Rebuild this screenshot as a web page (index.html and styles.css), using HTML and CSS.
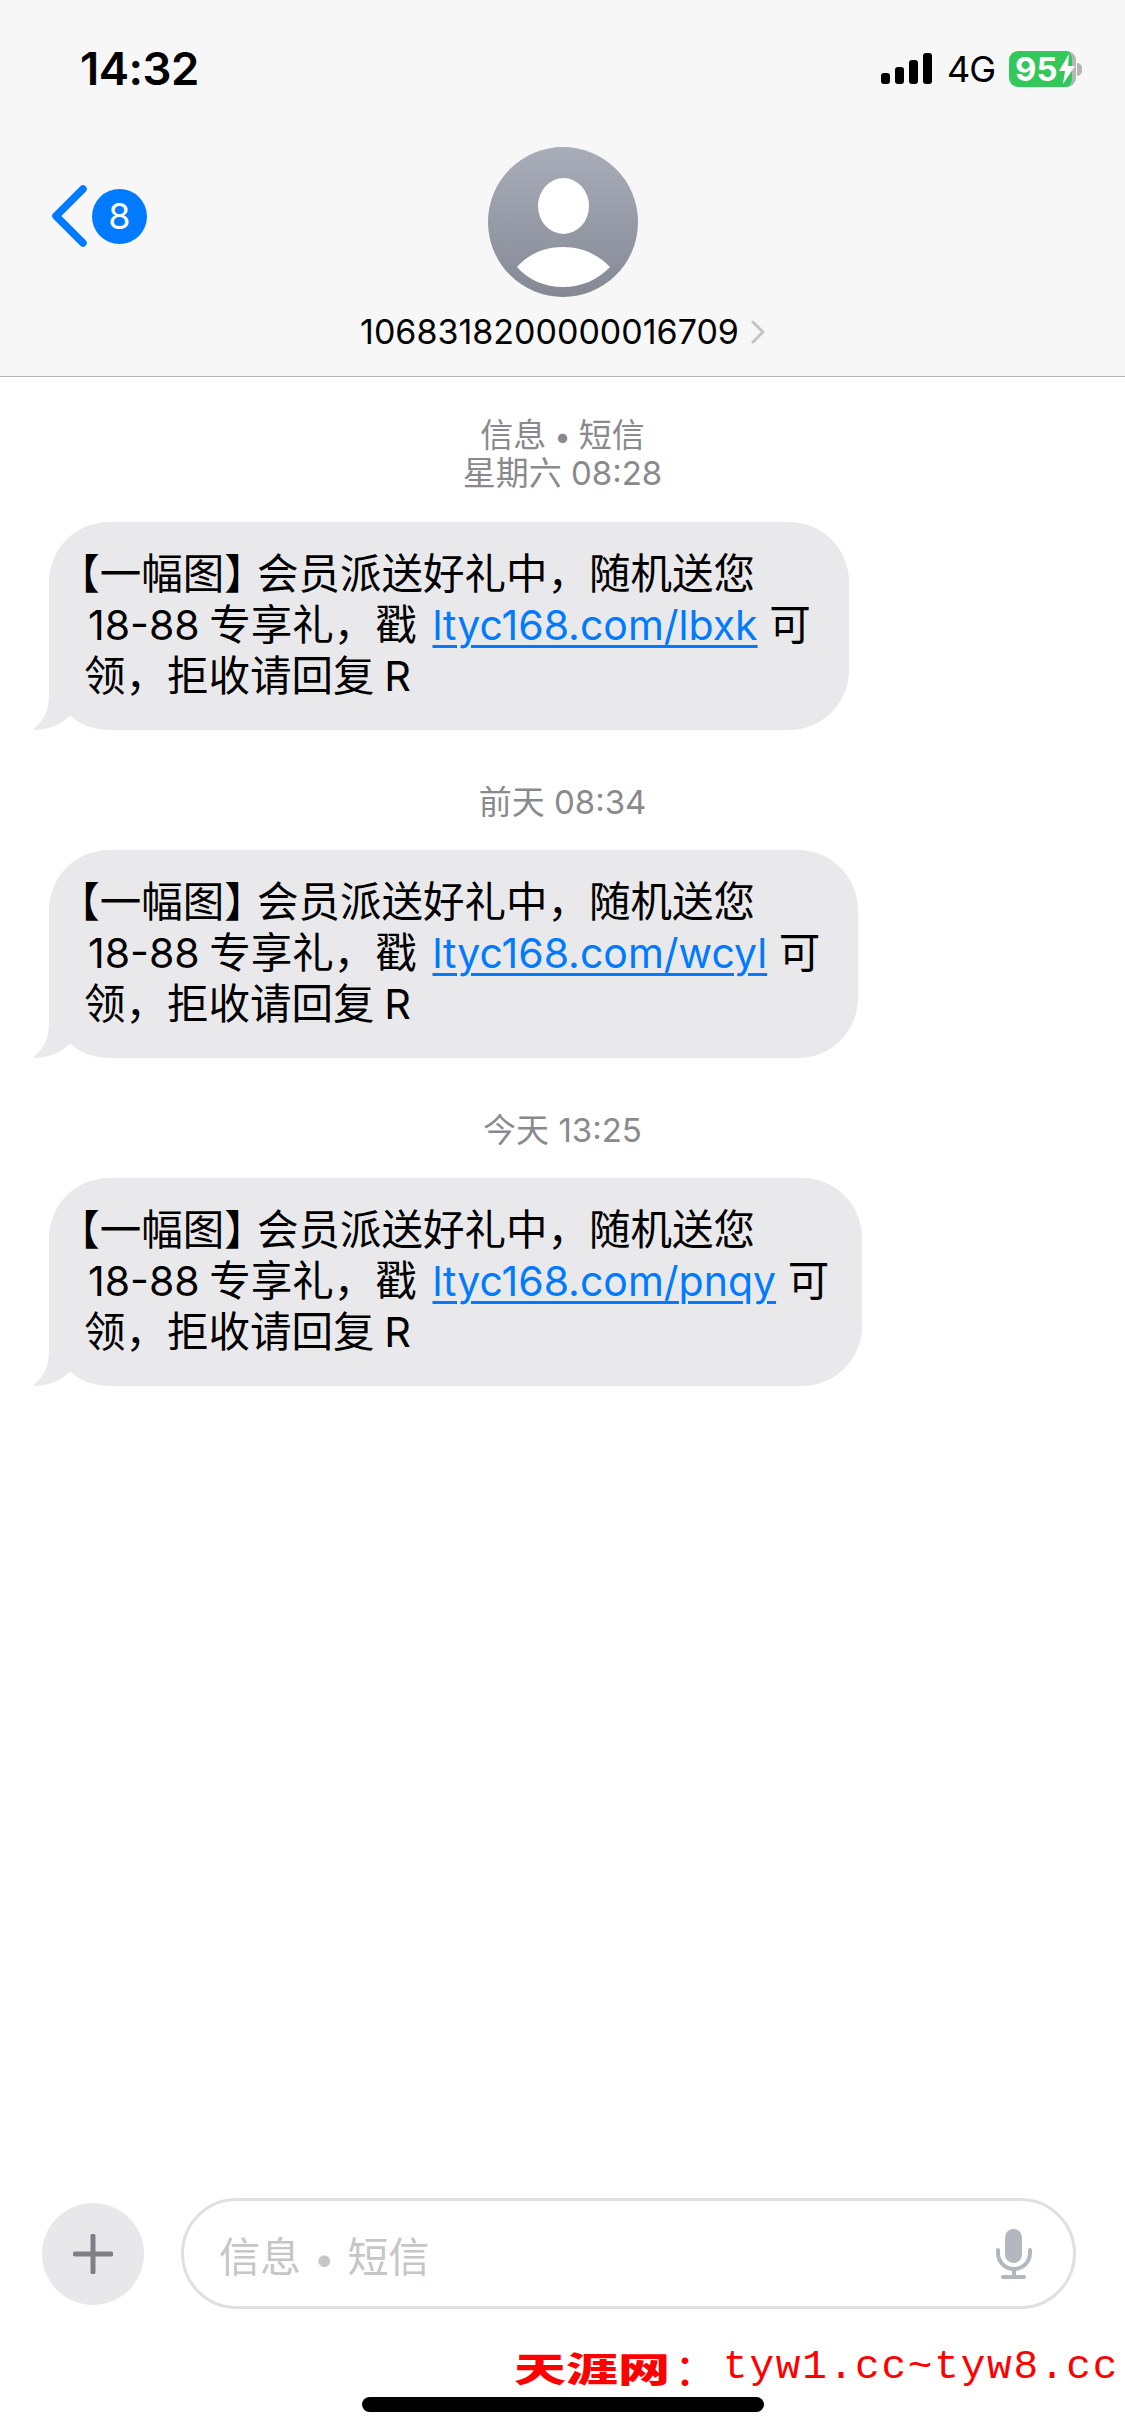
FILE: index.html
```html
<!DOCTYPE html>
<html lang="zh-CN">
<head>
<meta charset="utf-8">
<title>信息</title>
<link rel="stylesheet" href="styles.css">
</head>
<body>
<div class="screen">
  <header class="header">
    <div class="status">
      <span class="time">14:32</span>
      <div class="status-right">
        <svg class="signal" width="52" height="32" viewBox="0 0 52 32"><rect x="0" y="20" width="9" height="11" rx="3"/><rect x="14" y="14" width="9" height="17" rx="3"/><rect x="28" y="7" width="9" height="24" rx="3"/><rect x="42" y="0" width="9" height="31" rx="3"/></svg>
        <span class="net">4G</span>
        <div class="battery">
          <div class="battery-body"><span class="battery-num">95</span><svg class="bolt" width="18" height="30" viewBox="0 0 18 30"><path d="M11 0 1 17h6L5 30 17 12h-7z"/></svg></div>
          <span class="battery-cap"></span>
        </div>
      </div>
    </div>
    <div class="nav">
      <div class="back">
        <svg width="38" height="64" viewBox="0 0 38 64"><path d="M33 5 6 32l27 27" fill="none" stroke="#007aff" stroke-width="7.500" stroke-linecap="round" stroke-linejoin="round"/></svg>
        <span class="badge">8</span>
      </div>
      <svg class="avatar" width="150" height="150" viewBox="0 0 150 150">
        <defs><linearGradient id="ag" x1="0" y1="0" x2="0" y2="1"><stop offset="0" stop-color="#a9adb9"/><stop offset="1" stop-color="#858994"/></linearGradient></defs>
        <circle cx="75" cy="75" r="75" fill="url(#ag)"/>
        <ellipse cx="75.500" cy="59" rx="25.500" ry="28" fill="#fff"/>
        <path d="M29 120C40 107 57 100 75 100s35 7 47 20c-12 13-29 20-47 20s-35-7-46-20z" fill="#fff"/>
      </svg>
      <div class="contact"><span>1068318200000016709</span><svg width="14" height="24" viewBox="0 0 14 24"><path d="M2 2l10 10L2 22" fill="none" stroke="#c4c4c6" stroke-width="3" stroke-linecap="round" stroke-linejoin="round"/></svg></div>
    </div>
  </header>

  <main class="thread">
    <div class="stamp stamp-first">信息 <span class="dot">•</span> 短信<br>星期六 08:28</div>
    <div class="bubble">
      <svg class="tail" width="60" height="60" viewBox="0 0 60 60"><path d="M17 0v25C17 40 12 52 0 59.500 14 60.500 27 56 35 48l25-18V0z" fill="#e9e9eb"/></svg>
      <p class="msg"><span class="hang">【</span>一幅图<span class="close">】</span>会员派送好礼中，随机送您<br><span class="num">18-88</span> 专享礼，戳 <a class="link">ltyc168.com/lbxk</a> 可<br>领，拒收请回复 R</p>
    </div>
    <div class="stamp">前天 08:34</div>
    <div class="bubble">
      <svg class="tail" width="60" height="60" viewBox="0 0 60 60"><path d="M17 0v25C17 40 12 52 0 59.500 14 60.500 27 56 35 48l25-18V0z" fill="#e9e9eb"/></svg>
      <p class="msg"><span class="hang">【</span>一幅图<span class="close">】</span>会员派送好礼中，随机送您<br><span class="num">18-88</span> 专享礼，戳 <a class="link">ltyc168.com/wcyl</a> 可<br>领，拒收请回复 R</p>
    </div>
    <div class="stamp">今天 13:25</div>
    <div class="bubble bubble-tight">
      <svg class="tail" width="60" height="60" viewBox="0 0 60 60"><path d="M17 0v25C17 40 12 52 0 59.500 14 60.500 27 56 35 48l25-18V0z" fill="#e9e9eb"/></svg>
      <p class="msg"><span class="hang">【</span>一幅图<span class="close">】</span>会员派送好礼中，随机送您<br><span class="num">18-88</span> 专享礼，戳 <a class="link">ltyc168.com/pnqy</a> 可<br>领，拒收请回复 R</p>
    </div>
  </main>

  <footer class="composer">
    <div class="plus"><svg width="40" height="40" viewBox="0 0 40 40"><path d="M20 2v36M2 20h36" fill="none" stroke="#7f7f85" stroke-width="5" stroke-linecap="round"/></svg></div>
    <div class="field">
      <span class="placeholder">信息 <span class="dot">•</span> 短信</span>
      <svg width="36" height="50" viewBox="0 0 36 50"><rect x="9" y="0" width="17" height="34" rx="8.500" fill="#b3b8c0"/><path d="M2 21v3a16 16 0 0 0 32 0v-3" fill="none" stroke="#b3b8c0" stroke-width="4" stroke-linecap="round"/><path d="M18 41v6" stroke="#b3b8c0" stroke-width="4"/><rect x="5" y="46" width="25" height="4" rx="2" fill="#b3b8c0"/></svg>
    </div>
  </footer>
  <div class="bottom">
    <div class="watermark"><span class="wm-cn">天涯网</span><span class="wm-colon">：</span><span class="wm-en">tyw1.cc~tyw8.cc</span></div>
    <div class="home"></div>
  </div>
</div>
</body>
</html>
```

FILE: styles.css
```css
* { box-sizing: border-box; }
html, body { margin: 0; padding: 0; background: #fff; }
.screen {
  width: 1125px;
  height: 2436px;
  display: flex;
  flex-direction: column;
  overflow: hidden;
  font-family: "Inter", "Noto Sans CJK SC", sans-serif;
  color: #000;
}
.header {
  height: 377px;
  flex: none;
  background: #f7f7f7;
  border-bottom: 1px solid #b5b5b5;
  padding: 45px 0 0;
}
.status {
  height: 48px;
  display: flex;
  justify-content: space-between;
  align-items: center;
  padding: 0 43px 0 80px;
}
.time { font-size: 45.500px; font-weight: 600; letter-spacing: -0.5px; line-height: 48px; }
.status-right { display: flex; align-items: center; gap: 14px; }
.signal { fill: #000; }
.net { font-size: 36px; letter-spacing: -1px; line-height: 40px; font-weight: 400; }
.battery { display: flex; align-items: center; gap: 1px; }
.battery-body {
  width: 67px;
  height: 36px;
  border-radius: 9px;
  background: #34c759;
  border-right: 4px solid #b6b6b6;
  display: flex;
  align-items: center;
  justify-content: flex-start;
  padding-left: 6px;
  color: #fff;
  font-weight: 700;
  font-size: 33px;
  line-height: 36px;
}
.bolt { fill: #fff; flex: none; }
.battery-cap { width: 5px; height: 13px; background: #b6b6b6; border-radius: 0 6px 6px 0; }
.nav {
  position: relative;
  display: flex;
  flex-direction: column;
  align-items: center;
  padding-top: 54px;
}
.back {
  position: absolute;
  left: 50px;
  top: 91px;
  display: flex;
  align-items: center;
  gap: 4px;
}
.badge {
  width: 55px;
  height: 55px;
  border-radius: 50%;
  background: #007aff;
  color: #fff;
  display: flex;
  align-items: center;
  justify-content: center;
  font-size: 36px;
}
.avatar { display: block; }
.contact {
  margin-top: 17px;
  display: flex;
  align-items: center;
  gap: 12px;
  font-size: 34px;
  line-height: 36px;
}
.thread { flex: 1; padding: 0; display: flex; flex-direction: column; }
.stamp {
  text-align: center;
  color: #8a8a8e;
  font-size: 33px;
  line-height: 37px;
  margin: 54px 0 0;
  height: 38px;
}
.stamp-first { margin-top: 40px; height: 77px; }
.dot { font-size: 0.9em; font-weight: 700; }
.bubble {
  position: relative;
  align-self: flex-start;
  margin: 28px 0 0 49px;
  padding: 27px 38px 27px 35px;
  background: #e9e9eb;
  border-radius: 60px;
  height: 208px;
}
.bubble-tight { padding-right: 33px; }
.tail { position: absolute; left: -17px; bottom: 0; display: block; }
.msg {
  position: relative;
  margin: 0;
  font-size: 41.500px;
  line-height: 51px;
  white-space: nowrap;
  word-spacing: -2px;
}
.hang, .close { font-feature-settings: "halt"; }
.hang { margin-left: -5px; }
.close { margin-right: 12px; }
.num { font-size: 41px; margin-left: 4px; }
.link { font-size: 41px; margin-left: 6px; margin-right: 2px; color: #007aff; text-decoration: underline; text-decoration-thickness: 3px; text-underline-offset: 5px; }
.composer {
  flex: none;
  display: flex;
  align-items: center;
  gap: 37px;
  padding: 0 49px 0 42px;
  height: 111px;
}
.plus {
  width: 102px;
  height: 102px;
  flex: none;
  border-radius: 50%;
  background: #e8e8ea;
  display: flex;
  align-items: center;
  justify-content: center;
}
.field {
  flex: 1;
  height: 111px;
  border: 3px solid #e0e0e1;
  border-radius: 56px;
  background: #fff;
  display: flex;
  align-items: center;
  justify-content: space-between;
  padding: 0 41px 0 35px;
}
.placeholder { color: #c6c6c8; font-size: 41px; word-spacing: 3px; }
.bottom {
  flex: none;
  height: 127px;
  position: relative;
}
.watermark {
  position: absolute;
  left: 514px;
  top: 30px;
  display: flex;
  align-items: center;
  color: #ff0000;
  white-space: nowrap;
}
.wm-cn { display: inline-block; font-family: "Noto Sans CJK SC", sans-serif; font-weight: 900; font-size: 52px; line-height: 56px; transform: scaleY(0.66); }
.wm-colon { font-family: "Noto Sans CJK SC", sans-serif; font-size: 44px; line-height: 56px; margin-left: 4px; }
.wm-en { font-family: "Liberation Mono", monospace; font-size: 41px; letter-spacing: 1.800px; line-height: 56px; margin-left: 5px; }
.home {
  position: absolute;
  left: 362px;
  top: 88px;
  width: 402px;
  height: 15px;
  border-radius: 8px;
  background: #000;
}
```
